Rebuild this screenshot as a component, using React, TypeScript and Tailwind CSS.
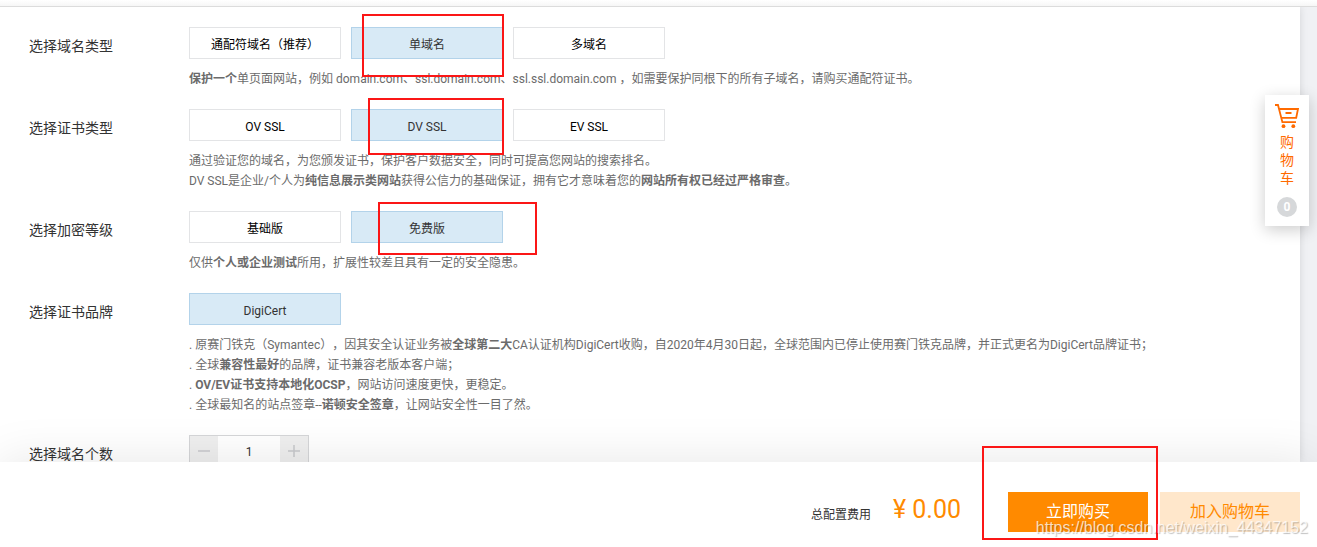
import React, { useState } from "react";

type Group = {
  label: string;
  options: string[];
  selected: string;
  notes: React.ReactNode[];
};

const B = ({ children }: { children: React.ReactNode }) => (
  <strong className="font-bold">{children}</strong>
);

const groups: Group[] = [
  {
    label: "选择域名类型",
    options: ["通配符域名（推荐）", "单域名", "多域名"],
    selected: "单域名",
    notes: [
      <><B>保护一个</B>单页面网站，例如 domain.com、ssl.domain.com、ssl.ssl.domain.com ，如需要保护同根下的所有子域名，请购买通配符证书。</>,
    ],
  },
  {
    label: "选择证书类型",
    options: ["OV SSL", "DV SSL", "EV SSL"],
    selected: "DV SSL",
    notes: [
      <>通过验证您的域名，为您颁发证书，保护客户数据安全，同时可提高您网站的搜索排名。</>,
      <>DV SSL是企业/个人为<B>纯信息展示类网站</B>获得公信力的基础保证，拥有它才意味着您的<B>网站所有权已经过严格审查</B>。</>,
    ],
  },
  {
    label: "选择加密等级",
    options: ["基础版", "免费版"],
    selected: "免费版",
    notes: [<>仅供<B>个人或企业测试</B>所用，扩展性较差且具有一定的安全隐患。</>],
  },
  {
    label: "选择证书品牌",
    options: ["DigiCert"],
    selected: "DigiCert",
    notes: [
      <>. 原赛门铁克（Symantec），因其安全认证业务被<B>全球第二大</B>CA认证机构DigiCert收购，自2020年4月30日起，全球范围内已停止使用赛门铁克品牌，并正式更名为DigiCert品牌证书；</>,
      <>. 全球<B>兼容性最好</B>的品牌，证书兼容老版本客户端；</>,
      <>. <B>OV/EV证书支持本地化OCSP</B>，网站访问速度更快，更稳定。</>,
      <>. 全球最知名的站点签章--<B>诺顿安全签章</B>，让网站安全性一目了然。</>,
    ],
  },
];

function OptionRow({ group }: { group: Group }) {
  const [selected, setSelected] = useState(group.selected);
  return (
    <div role="group" aria-label={group.label} className="flex items-start">
      <div className="w-40 shrink-0 text-sm leading-[38px] text-[#333]">{group.label}</div>
      <div className="min-w-0 flex-1">
        <div className="flex gap-2.5">
          {group.options.map((option) => (
            <button
              key={option}
              type="button"
              aria-pressed={option === selected}
              onClick={() => setSelected(option)}
              className={
                option === selected
                  ? "h-8 w-[152px] border border-[#b3d3ea] bg-[#d8eaf6] pt-1 text-xs text-[#333]"
                  : "h-8 w-[152px] border border-[#e3e4e6] bg-white pt-1 text-xs text-black"
              }
            >
              {option}
            </button>
          ))}
        </div>
        <div className="mt-2.5 text-xs text-[#6b6b6b]">
          {group.notes.map((note, i) => (
            <p key={i} className="leading-5">{note}</p>
          ))}
        </div>
      </div>
    </div>
  );
}

function Quantity() {
  const [count, setCount] = useState(1);
  return (
    <div className="flex items-start">
      <label htmlFor="count" className="w-40 shrink-0 text-sm leading-[38px] text-[#333]">
        选择域名个数
      </label>
      <div className="flex h-8 w-[120px] border border-[#d5d6d8]">
        <button
          type="button"
          aria-label="减少"
          onClick={() => setCount(Math.max(1, count - 1))}
          className="flex w-7 items-center justify-center bg-[#efefef]"
        >
          <svg width="12" height="12" viewBox="0 0 12 12" stroke="#c8c9cc" strokeWidth="1.5" aria-hidden="true">
            <path d="M0 6h12" />
          </svg>
        </button>
        <input
          id="count"
          value={count}
          onChange={(e) => setCount(Number(e.target.value) || 1)}
          className="min-w-0 flex-1 bg-white pt-0.5 text-center text-xs text-[#333] outline-none"
        />
        <button
          type="button"
          aria-label="增加"
          onClick={() => setCount(count + 1)}
          className="flex w-7 items-center justify-center bg-[#efefef]"
        >
          <svg width="12" height="12" viewBox="0 0 12 12" stroke="#c8c9cc" strokeWidth="1.5" aria-hidden="true">
            <path d="M0 6h12M6 0v12" />
          </svg>
        </button>
      </div>
    </div>
  );
}

function CartTab() {
  return (
    <a
      href="#cart"
      className="absolute top-[95px] right-2 z-20 flex w-11 flex-col items-center bg-white pt-2 pb-[9px] text-sm text-[#ff6a00] shadow-[0_4px_16px_rgba(0,0,0,0.2)]"
    >
      <svg width="26" height="26" viewBox="0 0 26 26" fill="none" stroke="#ff6a00" strokeWidth="1.8" aria-hidden="true">
        <path d="M1 2h3l4.4 17.2H22" />
        <path d="M5.2 6H24l-1.8 8.8H7.3" />
        <path d="M11.5 10h6" strokeWidth="2" />
        <circle cx="9.5" cy="23.2" r="1.9" fill="#ff6a00" stroke="none" />
        <circle cx="19.3" cy="23.2" r="1.9" fill="#ff6a00" stroke="none" />
      </svg>
      <span className="mt-1 w-3.5 leading-[18px]">购物车</span>
      <span className="mt-2.5 h-5 w-5 rounded-full bg-[#d6d8da] text-center text-xs leading-5 font-bold text-white">
        0
      </span>
    </a>
  );
}

export default function App() {
  return (
    <div lang="zh-CN" className="relative flex h-screen flex-col overflow-hidden bg-[#f0f1f4] font-[Roboto,'Noto_Sans_CJK_SC',sans-serif] [text-spacing-trim:space-all]">
      <div className="z-10 h-[7px] shrink-0 border-b border-[#dcdcdc] bg-linear-to-b from-white to-[#f6f6f6]" />
      <main className="mr-[17px] flex min-h-0 flex-1 flex-col gap-5 overflow-hidden bg-white pt-5 pl-[29px] shadow-[0_0_8px_rgba(0,0,0,0.12)]">
        {groups.map((group) => (
          <OptionRow key={group.label} group={group} />
        ))}
        <Quantity />
      </main>

      <footer className="z-10 flex shrink-0 items-start justify-end bg-white pt-[30px] pr-[17px] pb-[15px] shadow-[0_0_50px_rgba(0,0,0,0.1)]">
        <span className="pt-[13px] text-xs leading-5 text-[#333]">总配置费用</span>
        <span className="ml-[22px] text-[25px] leading-9 text-[#ff8a00]">¥ 0.00</span>
        <button type="button" className="ml-[47px] h-10 w-[140px] bg-[#ff8a00] text-base text-white">
          立即购买
        </button>
        <button type="button" className="ml-3 h-10 w-[140px] bg-[#ffe7cb] text-base text-[#ff8a00]">
          加入购物车
        </button>
      </footer>

      <CartTab />

      <div className="pointer-events-none absolute top-[14px] left-[362px] z-30 h-[63px] w-[142px] border-2 border-[#fb1616]" />
      <div className="pointer-events-none absolute top-[98px] left-[368px] z-30 h-[57px] w-[136px] border-2 border-[#fb1616]" />
      <div className="pointer-events-none absolute top-[202px] left-[378px] z-30 h-[53px] w-[159px] border-2 border-[#fb1616]" />
      <div className="pointer-events-none absolute right-[159px] bottom-[7px] z-30 h-[94px] w-[176px] border-2 border-[#fb1616]" />
      <div className="pointer-events-none absolute right-[9px] bottom-[7px] z-40 font-['Liberation_Sans',sans-serif] text-base leading-6 text-white/75 [text-shadow:1px_1px_1px_rgba(0,0,0,0.25)]">
        https://blog.csdn.net/weixin_44347152
      </div>
    </div>
  );
}
